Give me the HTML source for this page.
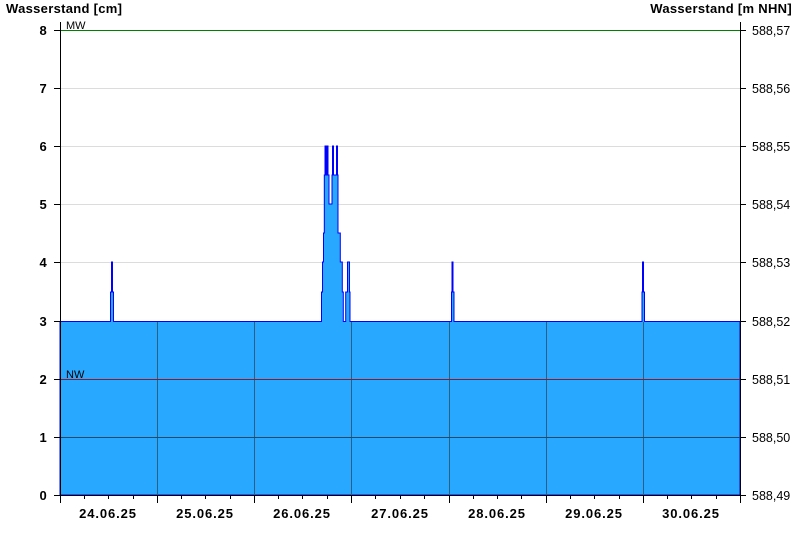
<!DOCTYPE html>
<html><head><meta charset="utf-8"><style>
html,body{margin:0;padding:0;background:#fff}
svg{display:block}
text{font-family:"Liberation Sans",Arial,sans-serif;font-size:12.5px;fill:#000}
.b{font-weight:bold;font-size:13px;letter-spacing:0.3px}
.d{font-weight:bold;font-size:13px;letter-spacing:0.9px}
</style></head><body>
<svg width="800" height="550" viewBox="0 0 800 550" xmlns="http://www.w3.org/2000/svg">
<g stroke="#dcdcdc" stroke-width="1">
<line x1="60" y1="88.5" x2="740" y2="88.5"/><line x1="60" y1="146.5" x2="740" y2="146.5"/>
<line x1="60" y1="204.5" x2="740" y2="204.5"/><line x1="60" y1="262.5" x2="740" y2="262.5"/>
</g>
<path d="M60,321.5 H110.5 V292 H111.5 V262 H112.5 V292 H113.5 V321.5 H321.5 V292 H322.5 V262 H323.5 V233 H324.3 V175 H325 V146 H326 V175 H327 V146 H328 V175 H329 V204 H332 V175 H332.5 V146 H333.5 V175 H336.5 V146 H337.5 V175 H338 V233 H340.3 V262 H342.3 V292 H343.3 V321.5 H345.7 V292 H347.5 V262 H349.5 V292 H350 V321.5 H451.5 V292 H452 V262 H453 V292 H454 V321.5 H642 V292 H642.5 V262 H643.5 V292 H644.5 V321.5 H740 V495 H60 Z" fill="#29a8ff" stroke="#0000ff" stroke-width="1"/>
<g stroke="#2a5f86" stroke-width="1">
<line x1="157.5" y1="322" x2="157.5" y2="495"/><line x1="254.5" y1="322" x2="254.5" y2="495"/>
<line x1="351.5" y1="322" x2="351.5" y2="495"/><line x1="449.5" y1="322" x2="449.5" y2="495"/>
<line x1="546.5" y1="322" x2="546.5" y2="495"/><line x1="643.5" y1="322" x2="643.5" y2="495"/>
</g>
<g stroke="#1d4a6a" stroke-width="1">
<line x1="60" y1="437.5" x2="740" y2="437.5"/>
</g>
<line x1="60" y1="379.5" x2="740" y2="379.5" stroke="#8a1a2a" stroke-width="1"/>
<line x1="60" y1="30.5" x2="740" y2="30.5" stroke="#008000" stroke-width="1"/>
<g stroke="#000" stroke-width="1">
<line x1="60.5" y1="22" x2="60.5" y2="503"/>
<line x1="740.5" y1="22" x2="740.5" y2="495"/>
<line x1="60" y1="495.5" x2="741" y2="495.5"/>
<path d="M54,30.5H60M54,88.5H60M54,146.5H60M54,204.5H60M54,262.5H60M54,321.5H60M54,379.5H60M54,437.5H60M54,495.5H60"/>
<path d="M740,30.5H746M740,88.5H746M740,146.5H746M740,204.5H746M740,262.5H746M740,321.5H746M740,379.5H746M740,437.5H746M740,495.5H746"/>
<path d="M157.5,495V503M254.5,495V503M351.5,495V503M449.5,495V503M546.5,495V503M643.5,495V503M740.5,495V503"/>
<path d="M84.5,495V499M108.5,495V499M133.5,495V499M181.5,495V499M205.5,495V499M230.5,495V499M278.5,495V499M302.5,495V499M327.5,495V499M375.5,495V499M400.5,495V499M424.5,495V499M473.5,495V499M497.5,495V499M521.5,495V499M570.5,495V499M594.5,495V499M619.5,495V499M667.5,495V499M691.5,495V499M716.5,495V499"/>
</g>
<text x="6" y="13" class="b">Wasserstand [cm]</text>
<text x="792" y="13" class="b" text-anchor="end">Wasserstand [m NHN]</text>
<text x="66" y="29" style="font-size:11px">MW</text>
<text x="66" y="378" style="font-size:11px">NW</text>
<g text-anchor="end">
<text x="47" y="35" class="b">8</text><text x="47" y="93" class="b">7</text><text x="47" y="151" class="b">6</text>
<text x="47" y="209" class="b">5</text><text x="47" y="267" class="b">4</text><text x="47" y="326" class="b">3</text>
<text x="47" y="384" class="b">2</text><text x="47" y="442" class="b">1</text><text x="47" y="500" class="b">0</text>
</g>
<g>
<text x="752" y="35">588,57</text><text x="752" y="93">588,56</text><text x="752" y="151">588,55</text>
<text x="752" y="209">588,54</text><text x="752" y="267">588,53</text><text x="752" y="326">588,52</text>
<text x="752" y="384">588,51</text><text x="752" y="442">588,50</text><text x="752" y="500">588,49</text>
</g>
<g text-anchor="middle">
<text x="108" y="518" class="d">24.06.25</text><text x="205" y="518" class="d">25.06.25</text>
<text x="302" y="518" class="d">26.06.25</text><text x="400" y="518" class="d">27.06.25</text>
<text x="497" y="518" class="d">28.06.25</text><text x="594" y="518" class="d">29.06.25</text>
<text x="691" y="518" class="d">30.06.25</text>
</g>
</svg>
</body></html>
